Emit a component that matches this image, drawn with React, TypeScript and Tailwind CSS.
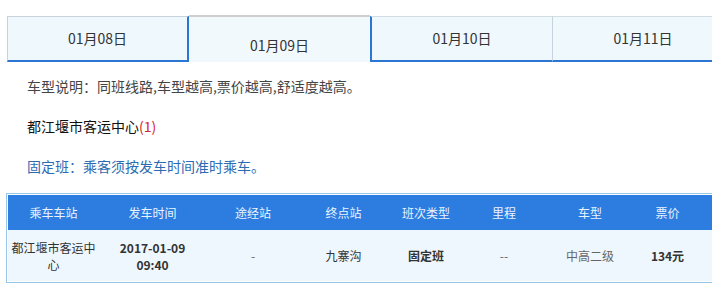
import React from "react";

const font = { fontFamily: '"Noto Sans CJK SC", "Noto Sans", sans-serif' };

const dates = ["01月08日", "01月09日", "01月10日", "01月11日"];

const headers = ["乘车车站", "发车时间", "途经站", "终点站", "班次类型", "里程", "车型", "票价", ""];

export default function App() {
  return (
    <div className="w-[712px] h-[301px] overflow-hidden bg-white" style={font}>
      <div className="w-[800px] pl-[6px] pt-[15px]">
        {/* date tabs */}
        <div className="flex items-end h-[47px] pl-px">
          <div className="w-[182px] h-[46px] box-border border-l border-t border-l-[#c6d3dd] border-t-[#c6d3dd] border-r-2 border-b-2 border-r-[#2a76d2] border-b-[#2a76d2] bg-[#eef8fd] flex items-center justify-center text-[14px] text-[#333]">
            {dates[0]}
          </div>
          <div className="w-[181px] h-[47px] box-border border-t-2 border-t-[#cfcfcf] bg-[#f1f9fd] flex items-center justify-center pt-[12px] text-[14px] text-[#333]">
            {dates[1]}
          </div>
          <div className="w-[183px] h-[46px] box-border border-l-2 border-l-[#2a76d2] border-t border-t-[#d3dde5] border-b-2 border-b-[#2a76d2] border-r border-r-[#c6d3dd] bg-[#eef8fd] flex items-center justify-center text-[14px] text-[#333]">
            {dates[2]}
          </div>
          <div className="w-[180px] h-[46px] box-border border-t border-t-[#d3dde5] border-b-2 border-b-[#2a76d2] bg-[#eef8fd] flex items-center justify-center text-[14px] text-[#333]">
            {dates[3]}
          </div>
        </div>

        {/* notes */}
        <div className="pl-[21px] pt-[4px] text-[14px]">
          <div className="h-[40px] flex items-center text-[#444]">车型说明：同班线路,车型越高,票价越高,舒适度越高。</div>
          <div className="h-[40px] flex items-center text-[#111]">
            都江堰市客运中心<span className="text-[#d8222c]">(1)</span>
          </div>
          <div className="h-[40px] flex items-center text-[#2b6cb3]">固定班：乘客须按发车时间准时乘车。</div>
        </div>

        {/* schedule table */}
        <div className="mt-[7px] w-[760px] border border-[#97c6e8] p-px">
          <div className="grid grid-cols-[91px_107px_94px_87px_78px_78px_94px_61px_68px] h-[35px] bg-[#2c7ddf] text-[12px] text-[#eaf3ff]">
            {headers.map((h, i) => (
              <div key={i} className="flex items-center justify-center">{h}</div>
            ))}
          </div>
          <div className="grid grid-cols-[91px_107px_94px_87px_78px_78px_94px_61px_68px] h-[51px] bg-[#eef7fd] text-[12px] leading-[17px] text-[#333]">
            <div className="flex items-center justify-center text-center px-[2px]">都江堰市客运中心</div>
            <div className="flex items-center justify-center text-center font-bold">
              2017-01-09
              <br />
              09:40
            </div>
            <div className="flex items-center justify-center text-[#666]">-</div>
            <div className="flex items-center justify-center">九寨沟</div>
            <div className="flex items-center justify-center font-bold">固定班</div>
            <div className="flex items-center justify-center text-[#666]">--</div>
            <div className="flex items-center justify-center text-[#666]">中高二级</div>
            <div className="flex items-center justify-center font-bold">134元</div>
            <div className="flex items-center justify-center"></div>
          </div>
        </div>
      </div>
    </div>
  );
}
